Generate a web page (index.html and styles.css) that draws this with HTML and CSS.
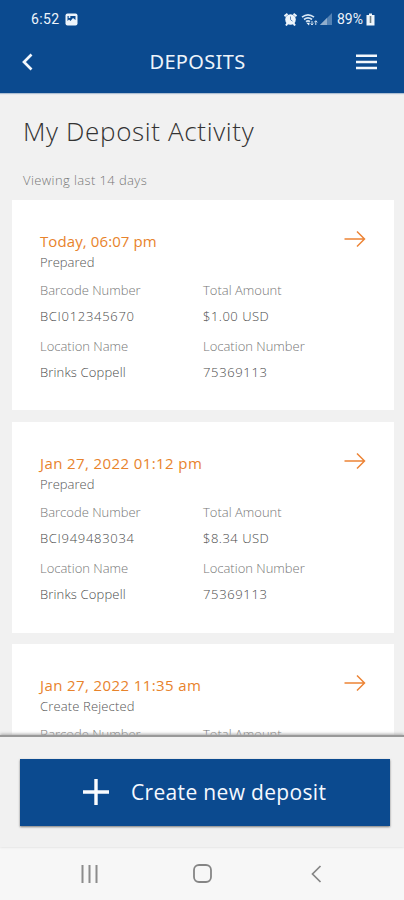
FILE: index.html
```html
<!DOCTYPE html>
<html lang="en">
<head>
<meta charset="utf-8">
<title>Deposits</title>
<link rel="stylesheet" href="styles.css">
</head>
<body>
<div class="app">
  <header class="top">
    <div class="status">
      <span class="clock">6:52</span>
      <svg class="photo" width="13" height="13" viewBox="0 0 13 13"><rect x=".5" y=".5" width="12" height="12" rx="2" fill="#eef5fc"/><path d="M2.5 8V3h8v4L8 5 5.500 8 4 6.500z" fill="#0b4a8f"/><circle cx="4.500" cy="4" r="1" fill="#eef5fc"/></svg>
      <div class="signals">
        <svg width="13" height="13" viewBox="0 0 13 13"><path d="M.5 3.200l3-2.400M12.500 3.200L9.500 .8M2 12.500l2-3M11 12.500l-2-3" stroke="#eef5fc" stroke-width="2"/><circle cx="6.500" cy="6.500" r="5.300" fill="#eef5fc"/><path d="M6.500 3.500v3.200l2 1.500" fill="none" stroke="#5b87b8"/></svg>
        <svg class="wifi" width="17" height="13" viewBox="0 0 17 13"><path d="M1 4.200Q7 -.5 13 4.200M3 6.500Q7 3.300 11 6.500M5 8.700Q7 7 9 8.700" fill="none" stroke="#d6e6f5" stroke-width="1.700"/><path d="M8 12.500L5.300 9.700h3.400z" fill="#eef5fc"/><path d="M11 8v4M9.700 10.500l1.300 1.500 1.300-1.500M14.800 12V8M13.300 9.300l1.500-1.600 1.500 1.600" fill="none" stroke="#d5e4f3"/></svg>
        <svg class="cell" width="12" height="12" viewBox="0 0 12 12"><path d="M0 12L12 0v12z" fill="#5482b4"/><path d="M0 12l7-7v7z" fill="#91aecd"/></svg>
        <span class="percent">89%</span>
        <svg class="battery" width="9" height="13" viewBox="0 0 9 13"><path d="M3 .5h3V2h2.500v10.500h-8V2H3z" fill="#eef5fc"/><path d="M4.500 3v7" stroke="#6e7f85" stroke-width="1.600"/></svg>
      </div>
    </div>
    <div class="bar">
      <svg class="back" width="12" height="18" viewBox="0 0 12 18"><path d="M9.500 1.500L2 9l7.500 7.500" fill="none" stroke="#f3f7fc" stroke-width="2.700"/></svg>
      <h1>DEPOSITS</h1>
      <svg class="menu" width="21" height="16" viewBox="0 0 21 16"><path d="M0 1.800h21M0 7.900h21M0 14h21" stroke="#f3f7fc" stroke-width="2.500"/></svg>
    </div>
  </header>
  <main>
    <h2>My Deposit Activity</h2>
    <p class="period">Viewing last 14 days</p>
    <article class="card">
      <div class="head"><h3 class="today">Today, 06:07 pm</h3><svg width="22" height="18" viewBox="0 0 22 18"><path d="M.5 9H20M13 1.500L20.500 9 13 16.500" fill="none" stroke="#ed8436" stroke-width="1.500"/></svg></div>
      <p class="state">Prepared</p>
      <dl>
        <div><dt>Barcode Number</dt><dd class="code">BCI012345670</dd></div>
        <div><dt>Total Amount</dt><dd class="amount">$1.00 USD</dd></div>
        <div><dt>Location Name</dt><dd>Brinks Coppell</dd></div>
        <div><dt>Location Number</dt><dd class="number">75369113</dd></div>
      </dl>
    </article>
    <article class="card second">
      <div class="head"><h3>Jan 27, 2022 01:12 pm</h3><svg width="22" height="18" viewBox="0 0 22 18"><path d="M.5 9H20M13 1.500L20.500 9 13 16.500" fill="none" stroke="#ed8436" stroke-width="1.500"/></svg></div>
      <p class="state">Prepared</p>
      <dl>
        <div><dt>Barcode Number</dt><dd class="code">BCI949483034</dd></div>
        <div><dt>Total Amount</dt><dd class="amount">$8.34 USD</dd></div>
        <div><dt>Location Name</dt><dd>Brinks Coppell</dd></div>
        <div><dt>Location Number</dt><dd class="number">75369113</dd></div>
      </dl>
    </article>
    <article class="card">
      <div class="head"><h3>Jan 27, 2022 11:35 am</h3><svg width="22" height="18" viewBox="0 0 22 18"><path d="M.5 9H20M13 1.500L20.500 9 13 16.500" fill="none" stroke="#ed8436" stroke-width="1.500"/></svg></div>
      <p class="state rejected">Create Rejected</p>
      <dl>
        <div><dt>Barcode Number</dt></div>
        <div><dt>Total Amount</dt></div>
      </dl>
    </article>
  </main>
  <footer>
    <button class="create"><svg width="26" height="26" viewBox="0 0 26 26"><path d="M13 0v26M0 13h26" stroke="#fafcff" stroke-width="3.400"/></svg><span>Create new deposit</span></button>
  </footer>
  <nav>
    <svg width="18" height="18" viewBox="0 0 18 18"><path d="M1.500 0v18M8.500 0v18M15.500 0v18" stroke="#8c8c8c" stroke-width="2"/></svg>
    <svg class="home" width="19" height="19" viewBox="0 0 19 19"><rect x="1" y="1" width="17" height="17" rx="5" fill="none" stroke="#858585" stroke-width="1.800"/></svg>
    <svg width="11" height="18" viewBox="0 0 11 18"><path d="M9.500 1L1.500 9l8 8" fill="none" stroke="#858585" stroke-width="1.700"/></svg>
  </nav>
</div>
</body>
</html>
```
FILE: styles.css
```css
* { box-sizing: border-box; margin: 0; padding: 0; }
body { width: 404px; height: 900px; overflow: hidden; font-family: "Open Sans", sans-serif; font-weight: 300; }
h1, h2, h3 { font-weight: inherit; }
svg { display: block; flex: none; }
.app { height: 900px; display: flex; flex-direction: column; background: #f1f1f1; }
.top { height: 93px; flex: none; background: #0b4a8f; color: #eef4fb; box-shadow: 0 1px 1px #aebfd2; }
.status { height: 40px; display: flex; align-items: center; padding: 0 29px 2px 31px; font: 400 14px/20px Roboto, sans-serif; }
.clock { width: 29px; letter-spacing: .4px; }
.photo { margin-left: 5px; }
.signals { display: flex; align-items: center; margin-left: auto; }
.wifi { margin-left: 4px; }
.cell { margin-left: 2px; }
.percent { margin-left: 5px; width: 27px; }
.battery { margin-left: 2px; }
.bar { height: 44px; display: grid; grid-template-columns: 60px 1fr 60px; align-items: center; }
.back { margin-left: 22px; }
.bar h1 { font-family: "Noto Sans", sans-serif; font-size: 20px; line-height: 28px; text-align: center; white-space: nowrap; margin-left: -9px; font-weight: 400; letter-spacing: .35px; }
.menu { margin-left: 12px; }
main { height: 642px; overflow: hidden; flex: none; }
h2 { font-size: 26px; line-height: 36px; margin: 20px 0 0 23px; color: #333; letter-spacing: .65px; }
.period { font-size: 13px; line-height: 20px; margin: 21px 0 9px 23px; color: #777; letter-spacing: .4px; }
.card { width: 382px; height: 210px; margin: 0 0 12px 12px; padding: 31px 28px 0; background: #fff; }
.card:first-of-type { margin-top: 10px; }
.card.second { height: 211px; margin-bottom: 11px; }
.head { display: flex; justify-content: space-between; height: 20px; }
.head svg { margin-top: -1px; }
h3 { font-size: 15px; line-height: 20px; color: #e8832c; font-weight: 400; letter-spacing: .4px; }
.today { letter-spacing: .1px; }
.state { font-size: 13px; line-height: 22px; color: #555; }
.rejected { letter-spacing: .15px; }
dl { display: grid; grid-template-columns: 163px 1fr; margin-top: 4px; }
dl div { height: 56px; }
dt, dd { font-size: 13px; line-height: 26px; white-space: nowrap; }
dt { color: #777; }
dd { color: #4b4b4b; letter-spacing: .15px; }
.code { letter-spacing: .7px; }
.amount { letter-spacing: .5px; }
.number { letter-spacing: .65px; }
footer { height: 112px; flex: none; padding: 22px 14px 0 20px; background: #f1f1f1; border-top: 2px solid #999; box-shadow: 0 -1px 3px #aaa; position: relative; }
.create { width: 370px; height: 67px; display: flex; align-items: center; padding: 0 0 2px 63px; border: 0; background: #0b4a8f; color: #f5f9ff; box-shadow: 0 1px 2px #777; font: 400 21px/30px "Open Sans", sans-serif; letter-spacing: .33px; }
.create span { margin-left: 22px; white-space: nowrap; }
nav { height: 53px; flex: none; display: flex; align-items: center; justify-content: space-between; padding: 0 82px 0 81px; background: #f7f7f7; }
.home { margin-left: -6px; }
```
